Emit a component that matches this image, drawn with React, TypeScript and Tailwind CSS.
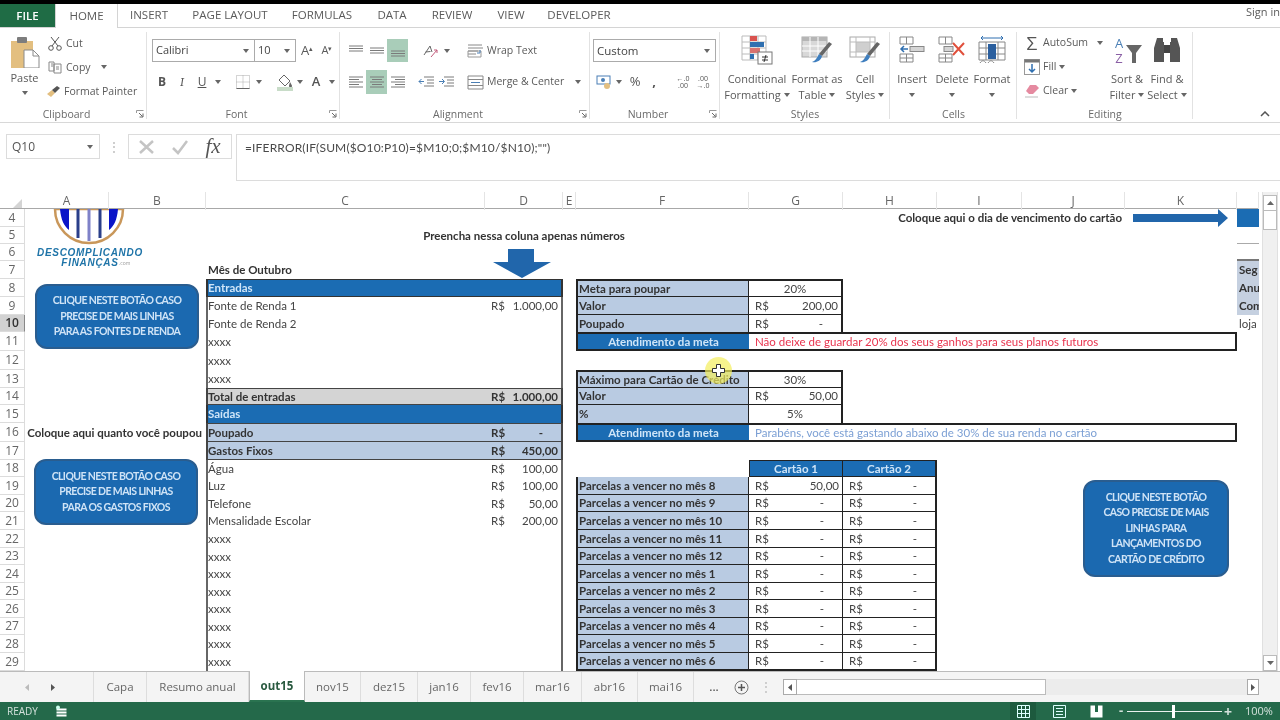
import type { ReactNode } from 'react'

const ui = "font-['Open_Sans',sans-serif]"
const cellFont = "font-['Lato',sans-serif]"

const tabs: [string, string][] = [
  ['INSERT', 'w-[62px]'],
  ['PAGE LAYOUT', 'w-[100px]'],
  ['FORMULAS', 'w-[84px]'],
  ['DATA', 'w-[56px]'],
  ['REVIEW', 'w-[64px]'],
  ['VIEW', 'w-[54px]'],
  ['DEVELOPER', 'w-[82px]'],
]

function Caret({ className = '' }: { className?: string }) {
  return (
    <svg width="6" height="4" viewBox="0 0 6 4" className={className}>
      <path d="M0 0h6L3 4z" fill="#666" />
    </svg>
  )
}

function Slot({ w, children, on }: { w: string; children?: ReactNode; on?: boolean }) {
  return (
    <div className={`${w} h-full flex items-center justify-center shrink-0 ${on ? 'bg-[#a9cdb9]' : ''}`}>{children}</div>
  )
}

function Launcher() {
  return (
    <svg width="8" height="8" viewBox="0 0 8 8" className="absolute right-[3px] bottom-[4px]">
      <path d="M.5 3V.5H7.5" fill="none" stroke="#999" />
      <path d="M3 3l3.500 3.500M7 3.500V7H3.500" fill="none" stroke="#666" />
    </svg>
  )
}

function Group({ w, label, launcher, children }: { w: string; label: string; launcher?: boolean; children: ReactNode }) {
  return (
    <div className={`${w} shrink-0 h-full flex flex-col relative`}>
      <div className="h-[78px]">{children}</div>
      <div className={`text-center text-[#6a6a6a] text-[10.500px] leading-[16px] ${launcher ? 'pr-[14px]' : ''}`}>{label}</div>
      {launcher && <Launcher />}
      <div className="absolute right-0 top-[4px] bottom-[3px] w-px bg-[#e2e2e2]" />
    </div>
  )
}

function Lines({ kind }: { kind: 'top' | 'mid' | 'bot' | 'l' | 'c' | 'r' }) {
  const ys = kind === 'top' ? [1, 3.500, 6] : kind === 'mid' ? [3, 5.500, 8] : kind === 'bot' ? [6, 8.500, 11] : [1, 3.500, 6, 8.500, 11]
  return (
    <svg width="14" height="12" viewBox="0 0 14 12">
      {ys.map((y, i) => {
        const short = i % 2 === 1 && ys.length === 5
        const x1 = kind === 'r' && short ? 4 : kind === 'c' && short ? 2 : 0
        const x2 = kind === 'l' && short ? 10 : kind === 'c' && short ? 12 : 14
        return <line key={y} x1={x1} x2={x2} y1={y} y2={y} stroke="#7a7a7a" strokeWidth="1" />
      })}
    </svg>
  )
}

function Indent({ flip }: { flip?: boolean }) {
  return (
    <svg width="16" height="12" viewBox="0 0 16 12">
      <path d="M6 1h10M9 4h7M9 7h7M6 10h10" stroke="#7a7a7a" fill="none" />
      <path d={flip ? 'M1 5.500h5M4 3l2.500 2.500L4 8' : 'M6 5.500H1M3.500 3L1 5.500 3.500 8'} stroke="#4a7fb5" fill="none" />
    </svg>
  )
}

function PasteIcon() {
  return (
    <svg width="32" height="32" viewBox="0 0 32 32">
      <rect x="2" y="5" width="22" height="27" fill="#e3bf80" />
      <rect x="8" y="1" width="10" height="6" rx="1" fill="#7d7d7d" />
      <path d="M15 14h9l6 6v12H15z" fill="#fff" stroke="#8a8a8a" />
      <path d="M24 14v6h6" fill="none" stroke="#8a8a8a" />
    </svg>
  )
}

function BrushIcon() {
  return (
    <svg width="16" height="14" viewBox="0 0 16 14">
      <path d="M1 10l5-4 3 3-4 4z" fill="#e3bf80" />
      <path d="M6 6l5-4 3 2-5 5z" fill="#555" />
    </svg>
  )
}

function CondIcon() {
  return (
    <svg width="32" height="30" viewBox="0 0 32 30">
      <path d="M1 1h24v24H1zM1 7h24M1 13h24M1 19h24M9 1v24M17 1v24" fill="#fff" stroke="#bbb" />
      <rect x="9" y="1" width="7" height="5" fill="#d9534f" />
      <rect x="9" y="7" width="14" height="5" fill="#2f6fb0" />
      <rect x="9" y="13" width="10" height="5" fill="#d9736f" />
      <rect x="9" y="19" width="4" height="5" fill="#2f6fb0" />
      <rect x="17" y="17" width="14" height="12" fill="#fff" stroke="#777" />
      <path d="M21 22h6M21 25h6M25 20l-2 7" stroke="#333" fill="none" />
    </svg>
  )
}

function TableIcon() {
  return (
    <svg width="32" height="30" viewBox="0 0 32 30">
      <rect x="1" y="2" width="25" height="20" fill="#d8d8d8" stroke="#aaa" />
      <rect x="1" y="2" width="25" height="4" fill="#b5b5b5" />
      <path d="M1 11h25M1 16h25M9 2v20M17 2v20" stroke="#fff" />
      <path d="M31 9L21 21l-3-2L28 7z" fill="#666" />
      <path d="M18 19l3 2c-1 5-6 7-10 6 3-1 5-4 7-8z" fill="#3f7fbf" />
    </svg>
  )
}

function CellStyleIcon() {
  return (
    <svg width="32" height="30" viewBox="0 0 32 30">
      <rect x="1" y="2" width="25" height="20" fill="#fff" stroke="#aaa" />
      <rect x="7" y="7" width="14" height="10" fill="#cfcfcf" />
      <path d="M1 7h25M1 17h25M7 2v20M21 2v20" stroke="#bbb" />
      <path d="M31 9L21 21l-3-2L28 7z" fill="#666" />
      <path d="M18 19l3 2c-1 5-6 7-10 6 3-1 5-4 7-8z" fill="#3f7fbf" />
    </svg>
  )
}

function InsertIcon() {
  return (
    <svg width="26" height="28" viewBox="0 0 26 28">
      <path d="M1 1h13v7H1zM7.500 1v7M1 18h13v8H1zM1 22h13M7.500 18v8" fill="#fff" stroke="#888" />
      <rect x="11" y="10.500" width="14" height="5" fill="#d5d5d5" stroke="#888" />
      <path d="M9 13H2M5 10l-3 3 3 3" fill="none" stroke="#2f6fb0" strokeWidth="1.500" />
    </svg>
  )
}

function DeleteIcon() {
  return (
    <svg width="28" height="28" viewBox="0 0 28 28">
      <path d="M1 1h13v7H1zM7.500 1v7M1 18h13v8H1zM1 22h13M7.500 18v8" fill="#fff" stroke="#888" />
      <rect x="6" y="10.500" width="9" height="5" fill="#d5d5d5" stroke="#888" />
      <path d="M15 7l11 12M26 7L15 19" stroke="#e0503c" strokeWidth="2" />
    </svg>
  )
}

function FormatIcon() {
  return (
    <svg width="28" height="30" viewBox="0 0 28 30">
      <path d="M1 7h26v18H1zM1 13h26M1 19h26M8 7v18M20 7v18" fill="#fff" stroke="#888" />
      <rect x="10" y="9" width="8" height="15" fill="#2b5f9e" />
      <path d="M3 3h22M3 3l2-2M3 3l2 2M25 3l-2-2M25 3l-2 2" fill="none" stroke="#2f6fb0" />
      <path d="M2 28c2-3 4-3 6 0M10 28c2-3 4-3 6 0" fill="none" stroke="#888" />
    </svg>
  )
}

function SortIcon() {
  return (
    <div className="w-[30px] h-[30px] flex items-center">
      <div className="w-[14px] flex flex-col items-center gap-[1px] text-[13px]">
        <span className="text-[#4a7fb5] h-[14px] leading-[14px]">A</span>
        <span className="text-[#8a5fa5] h-[14px] leading-[14px]">Z</span>
      </div>
      <svg width="16" height="18" viewBox="0 0 16 18" className="mt-[8px]">
        <path d="M0 0h16l-6 8v10H6V8z" fill="#666" />
      </svg>
    </div>
  )
}

function FindIcon() {
  return (
    <svg width="28" height="26" viewBox="0 0 28 26">
      <path d="M4 1h6v4h1v20H1V11zM24 1h-6v4h-1v20h10V11z" fill="#555" />
      <rect x="11" y="8" width="6" height="8" fill="#444" />
    </svg>
  )
}

function BigBtn({ w, icon, a, b }: { w: string; icon: ReactNode; a: string; b?: string }) {
  return (
    <div className={`${w} shrink-0 flex flex-col items-center pt-[7px] text-[11px]`}>
      <div className="h-[30px] flex items-center">{icon}</div>
      <div className="mt-[6px] leading-[16px] whitespace-nowrap">{a}</div>
      <div className="h-[16px] leading-[16px] flex items-center gap-[3px] whitespace-nowrap">
        {b}
        <Caret />
      </div>
    </div>
  )
}

function Ribbon() {
  return (
    <div className="h-[95px] flex border-b border-[#d8d8d8] text-[#5a5a5a] text-[10.500px] shrink-0">
      <Group w="w-[147px]" label="Clipboard" launcher>
        <div className="flex">
          <div className="w-[46px] flex flex-col items-center pt-[8px] pl-[3px]">
            <PasteIcon />
            <div className="mt-[3px] leading-[14px] text-[11px]">Paste</div>
            <Caret className="mt-[6px]" />
          </div>
          <div className="pt-[3px] leading-[24px]">
            <div className="h-[24px] flex items-center gap-[4px] pl-[2px]">
              <svg width="14" height="15" viewBox="0 0 14 15">
                <path d="M3 1l7 9M11 1L4 10" stroke="#555" fill="none" />
                <circle cx="3" cy="12" r="2.300" fill="none" stroke="#555" />
                <circle cx="11" cy="12" r="2.300" fill="none" stroke="#555" />
              </svg>
              Cut
            </div>
            <div className="h-[24px] flex items-center gap-[4px] pl-[2px]">
              <svg width="14" height="13" viewBox="0 0 14 13">
                <path d="M1 1h5v9H1zM6 3h7v9H6zM3 3h2M3 5h2M8 6h3M8 8h3" fill="#fff" stroke="#888" />
              </svg>
              Copy
              <Caret className="ml-[6px]" />
            </div>
            <div className="h-[24px] flex items-center gap-[2px]">
              <BrushIcon />
              Format Painter
            </div>
          </div>
        </div>
      </Group>

      <Group w="w-[193px]" label="Font" launcher>
        <div className="flex h-[23px] mt-[11px] pl-[5px]">
          <div className="w-[103px] border border-[#ababab] flex items-center justify-between px-[3px] text-[#444] text-[11px]">
            Calibri
            <Caret className="mr-[2px]" />
          </div>
          <div className="w-[41px] border border-l-0 border-[#ababab] flex items-center justify-between px-[3px] text-[#444] text-[11px]">
            10
            <Caret className="mr-[2px]" />
          </div>
          <Slot w="w-[20px] ml-[1px]">
            <span className="text-[13px]">A<sup className="text-[7px]">▴</sup></span>
          </Slot>
          <Slot w="w-[20px]">
            <span className="text-[11px]">A<sup className="text-[7px]">▾</sup></span>
          </Slot>
        </div>
        <div className="flex h-[24px] mt-[8px] pl-[5px] text-[12px] text-[#555]">
          <Slot w="w-[20px]"><b>B</b></Slot>
          <Slot w="w-[20px]"><i className="font-serif">I</i></Slot>
          <Slot w="w-[20px]"><u>U</u></Slot>
          <Slot w="w-[12px]"><Caret /></Slot>
          <Slot w="w-[22px] ml-[8px]">
            <svg width="14" height="14" viewBox="0 0 14 14">
              <path d="M.5.500h13v13H.5zM7 .5v13M.5 7h13" fill="none" stroke="#aaa" strokeDasharray="1 1" />
              <path d="M.5 13.500h13" stroke="#666" />
            </svg>
          </Slot>
          <Slot w="w-[10px]"><Caret /></Slot>
          <Slot w="w-[22px] ml-[10px]">
            <svg width="18" height="17" viewBox="0 0 18 17">
              <path d="M8 1l6 6-5 5-6-6z" fill="#fff" stroke="#666" />
              <path d="M14 8c1 2 2 3 2 4a1.500 1.500 0 01-3 0c0-1 .5-2 1-4z" fill="#666" />
              <rect x="1" y="13" width="16" height="4" fill="#c8dcc8" />
            </svg>
          </Slot>
          <Slot w="w-[8px]"><Caret /></Slot>
          <Slot w="w-[20px] ml-[2px]"><span className="font-semibold text-[13px]">A</span></Slot>
          <Slot w="w-[12px]"><Caret /></Slot>
        </div>
      </Group>

      <Group w="w-[250px]" label="Alignment" launcher>
        <div className="flex h-[23px] mt-[11px] pl-[6px]">
          <Slot w="w-[20px]"><Lines kind="top" /></Slot>
          <Slot w="w-[21px]"><Lines kind="mid" /></Slot>
          <Slot w="w-[21px]" on><Lines kind="bot" /></Slot>
          <Slot w="w-[24px] ml-[10px]">
            <svg width="16" height="14" viewBox="0 0 16 14">
              <path d="M2 11L8 2l2 6M3.500 8l5-.5" stroke="#666" fill="none" />
              <path d="M9 13l6-7M12 6h3v3" stroke="#c25a7a" fill="none" />
            </svg>
          </Slot>
          <Slot w="w-[10px]"><Caret /></Slot>
          <div className="ml-[15px] flex items-center gap-[3px] whitespace-nowrap">
            <svg width="17" height="14" viewBox="0 0 17 14">
              <path d="M1 1h14M1 4h15M1 7h10M1 10h8" stroke="#888" fill="none" />
              <path d="M1 7h13v6H1z" fill="none" stroke="#999" />
              <path d="M13 6v3h-3" stroke="#4a7fb5" fill="none" />
            </svg>
            Wrap Text
          </div>
        </div>
        <div className="flex h-[24px] mt-[8px] pl-[6px]">
          <Slot w="w-[20px]"><Lines kind="l" /></Slot>
          <Slot w="w-[21px]" on><Lines kind="c" /></Slot>
          <Slot w="w-[21px]"><Lines kind="r" /></Slot>
          <Slot w="w-[20px] ml-[8px]"><Indent /></Slot>
          <Slot w="w-[20px]"><Indent flip /></Slot>
          <div className="ml-[11px] flex items-center gap-[3px] whitespace-nowrap">
            <svg width="17" height="15" viewBox="0 0 17 15">
              <path d="M1 1h15v13H1zM1 4.500h15M1 10.500h15" fill="#fff" stroke="#888" />
              <path d="M4 7.500h9" stroke="#4a7fb5" />
            </svg>
            Merge &amp; Center
            <Caret className="ml-[8px]" />
          </div>
        </div>
      </Group>

      <Group w="w-[130px]" label="Number" launcher>
        <div className="h-[23px] mt-[11px] ml-[3px] w-[123px] border border-[#ababab] flex items-center justify-between px-[3px] text-[11.500px] text-[#444]">
          Custom
          <Caret className="mr-[2px]" />
        </div>
        <div className="flex h-[24px] mt-[8px] pl-[5px] text-[#555]">
          <Slot w="w-[18px]">
            <svg width="16" height="15" viewBox="0 0 16 15">
              <rect x="1" y="1" width="13" height="8" fill="#fff" stroke="#4a7fb5" />
              <circle cx="7" cy="5" r="2" fill="#4a7fb5" />
              <circle cx="11" cy="11" r="3" fill="#e3bf80" />
            </svg>
          </Slot>
          <Slot w="w-[12px]"><Caret /></Slot>
          <Slot w="w-[20px]"><span className="text-[13px]">%</span></Slot>
          <Slot w="w-[18px]"><b className="text-[13px]">,</b></Slot>
          <Slot w="w-[20px] ml-[10px]">
            <span className="text-[7px] leading-[7px] text-center">←.0<br />.00</span>
          </Slot>
          <Slot w="w-[20px]">
            <span className="text-[7px] leading-[7px] text-center">.00<br />→.0</span>
          </Slot>
        </div>
      </Group>

      <Group w="w-[170px]" label="Styles">
        <div className="flex pl-[2px]">
          <BigBtn w="w-[70px]" icon={<CondIcon />} a="Conditional" b="Formatting" />
          <BigBtn w="w-[50px]" icon={<TableIcon />} a="Format as" b="Table" />
          <BigBtn w="w-[46px]" icon={<CellStyleIcon />} a="Cell" b="Styles" />
        </div>
      </Group>

      <Group w="w-[127px]" label="Cells">
        <div className="flex pl-[2px]">
          <BigBtn w="w-[40px]" icon={<InsertIcon />} a="Insert" />
          <BigBtn w="w-[40px]" icon={<DeleteIcon />} a="Delete" />
          <BigBtn w="w-[40px]" icon={<FormatIcon />} a="Format" />
        </div>
      </Group>

      <Group w="w-[176px]" label="Editing">
        <div className="flex">
          <div className="w-[90px] pl-[7px] pt-[3px]">
            <div className="h-[24px] flex items-center gap-[3px]">
              <span className="w-[16px] text-[19px] leading-none text-[#555] text-center">Σ</span>
              AutoSum
              <Caret className="ml-[6px]" />
            </div>
            <div className="h-[24px] flex items-center gap-[3px]">
              <svg width="16" height="16" viewBox="0 0 16 16">
                <rect x=".5" y=".5" width="15" height="15" fill="#fff" stroke="#999" />
                <rect x=".5" y=".5" width="15" height="3" fill="#777" />
                <path d="M8 5v8M5 10l3 3 3-3" fill="none" stroke="#2f6fb0" strokeWidth="1.500" />
              </svg>
              Fill
              <Caret />
            </div>
            <div className="h-[24px] flex items-center gap-[3px]">
              <svg width="16" height="14" viewBox="0 0 16 14">
                <path d="M6 1h6l3 3-6 6H5L2 7z" fill="#e58aa0" />
                <path d="M1 13h13" stroke="#bbb" />
              </svg>
              Clear
              <Caret />
            </div>
          </div>
          <BigBtn w="w-[40px]" icon={<SortIcon />} a="Sort &" b="Filter" />
          <BigBtn w="w-[40px]" icon={<FindIcon />} a="Find &" b="Select" />
        </div>
      </Group>

      <div className="flex-1 flex items-end justify-end pr-[10px] pb-[5px]">
        <svg width="10" height="6" viewBox="0 0 10 6">
          <path d="M1 5l4-4 4 4" fill="none" stroke="#555" strokeWidth="1.500" />
        </svg>
      </div>
    </div>
  )
}

function FormulaBar() {
  return (
    <div className="h-[69px] shrink-0 flex items-start pt-[11px] pl-[6px]">
      <div className="w-[94px] h-[25px] border border-[#dcdcdc] flex items-center justify-between pl-[5px] pr-[6px] text-[12px] text-[#555]">
        Q10
        <Caret />
      </div>
      <div className="w-[28px] h-[25px] flex items-center justify-center text-[#b5b5b5] text-[12px] leading-[6px]">⋮</div>
      <div className="w-[104px] h-[25px] border border-[#dcdcdc] flex items-center">
        <Slot w="w-[34px]">
          <svg width="17" height="16" viewBox="0 0 17 16"><path d="M2 2l13 12M15 2L2 14" stroke="#c4c4c4" strokeWidth="2.500" /></svg>
        </Slot>
        <Slot w="w-[34px]">
          <svg width="18" height="16" viewBox="0 0 18 16"><path d="M2 9l5 5L16 2" fill="none" stroke="#c4c4c4" strokeWidth="2.500" /></svg>
        </Slot>
        <Slot w="w-[32px]">
          <i className="font-['Liberation_Serif',serif] text-[21px] text-[#555]">fx</i>
        </Slot>
      </div>
      <div className={`ml-[4px] flex-1 h-[47px] border border-[#dcdcdc] border-r-0 pl-[8px] pt-[4px] text-[12px] text-[#4a4a4a] tracking-[0.15px] ${cellFont}`}>
        =IFERROR(IF(SUM($O10:P10)=$M10;0;$M10/$N10);"")
      </div>
    </div>
  )
}

const cols = ['A', 'B', 'C', 'D', 'E', 'F', 'G', 'H', 'I', 'J', 'K', 'L'] as const
type Col = (typeof cols)[number]
type Cell = { t?: ReactNode; c?: string; span?: number }
type Row = Partial<Record<Col, Cell>>

const blue = 'bg-[#1b6cb3] text-[#cfe5f8] font-bold'
const label = 'bg-[#b9cbe2] text-[#333] font-bold border-l-2 border-r border-[#222]'

function Money({ v, bold }: { v: string; bold?: boolean }) {
  return (
    <div className={`w-full flex justify-between pl-[6px] pr-[3px] ${bold ? 'font-bold' : ''}`}>
      <span>R$</span>
      <span className={v === '-' ? 'pr-[15px]' : ''}>{v}</span>
    </div>
  )
}

const plain = (t: string): Row => ({
  C: { t, c: 'border-l-2 border-[#666]' },
  D: { c: 'border-r-2 border-[#666]' },
})
const spend = (t: string, v: string): Row => ({
  C: { t, c: 'border-l-2 border-[#666]' },
  D: { t: <Money v={v} />, c: 'border-r-2 border-[#666]' },
})
const xxxx = plain('xxxx')

const cardRow = (n: number, a: string, last?: boolean): Row => ({
  F: { t: `Parcelas a vencer no mês ${n}`, c: `${label} pl-[1px] border-b ${last ? 'border-b-2' : ''}` },
  G: { t: <Money v={a} />, c: `bg-white border-r border-b border-[#222] ${last ? 'border-b-2' : ''}` },
  H: { t: <Money v="-" />, c: `bg-white border-r-2 border-b border-[#222] ${last ? 'border-b-2' : ''}` },
})

const goalHead = (t: string, msg: string, color: string): Row => ({
  F: { t, c: `${blue} border-y-2 border-l-2 border-[#222] justify-center` },
  G: { t: msg, c: `col-span-5 bg-white border-y-2 border-r-2 border-[#222] pl-[6px] ${color}`, span: 5 },
})

const heights = [18, 17, 17, 18, 18, 18, 17, 19, 19, 18, 17, 18, 19, 18, 17, 18, 17, 18, 18, 17, 18, 17, 18, 17, 18, 18]

const rows: Row[] = [
  {
    H: { t: 'Coloque aqui o dia de vencimento do cartão', c: 'col-span-3 justify-end font-bold text-[#333] pr-[3px]', span: 3 },
    L: { c: 'bg-[#1b6cb3]' },
  },
  {
    D: { t: 'Preencha nessa coluna apenas números', c: 'justify-center font-bold text-[#333] overflow-visible' },
    L: { c: 'border-b border-[#aaa]' },
  },
  { L: { c: 'border-b-2 border-[#777]' } },
  {
    C: { t: 'Mês de Outubro', c: 'font-bold text-[#333] pl-[2px]' },
    L: { t: 'Seg', c: 'bg-[#c5d0e0] font-bold text-[#333] pl-[2px]' },
  },
  {
    C: { t: 'Entradas', c: `${blue} border-y border-l-2 border-[#333]` },
    D: { c: `${blue} border-y border-r-2 border-[#333]` },
    F: { t: 'Meta para poupar', c: `${label} border-t-2 border-b pl-[1px]` },
    G: { t: '20%', c: 'bg-white border-t-2 border-r-2 border-b border-[#222] justify-center' },
    L: { t: 'Anu', c: 'bg-[#c5d0e0] font-bold text-[#333] pl-[2px]' },
  },
  {
    ...spend('Fonte de Renda 1', '1.000,00'),
    F: { t: 'Valor', c: `${label} border-b pl-[1px]` },
    G: { t: <Money v="200,00" />, c: 'bg-white border-r-2 border-b border-[#222]' },
    L: { t: 'Com', c: 'bg-[#c5d0e0] font-bold text-[#333] pl-[2px]' },
  },
  {
    ...plain('Fonte de Renda 2'),
    F: { t: 'Poupado', c: `${label} pl-[1px]` },
    G: { t: <Money v="-" />, c: 'bg-white border-r-2 border-[#222]' },
    L: { t: 'loja', c: 'pl-[2px]' },
  },
  { ...xxxx, ...goalHead('Atendimento da meta', 'Não deixe de guardar 20% dos seus ganhos para seus planos futuros', 'text-[#e8344e]') },
  xxxx,
  {
    ...xxxx,
    F: { t: 'Máximo para Cartão de Crédito', c: `${label} border-t-2 border-b pl-[1px]` },
    G: { t: '30%', c: 'bg-white border-t-2 border-r-2 border-b border-[#222] justify-center' },
  },
  {
    C: { t: 'Total de entradas', c: 'bg-[#d4d4d4] font-bold text-[#333] border-y border-l-2 border-[#444]' },
    D: { t: <Money v="1.000,00" bold />, c: 'bg-[#d4d4d4] text-[#333] border-y border-r-2 border-[#444]' },
    F: { t: 'Valor', c: `${label} border-b pl-[1px]` },
    G: { t: <Money v="50,00" />, c: 'bg-white border-r-2 border-b border-[#222]' },
  },
  {
    C: { t: 'Saídas', c: `${blue} border-l-2 border-[#333]` },
    D: { c: `${blue} border-r-2 border-[#333]` },
    F: { t: '%', c: `${label} pl-[1px]` },
    G: { t: '5%', c: 'bg-white border-r-2 border-[#222] justify-center' },
  },
  {
    A: { t: 'Coloque aqui quanto você poupou', c: 'col-span-2 justify-end font-bold text-[#333] pr-[4px]', span: 2 },
    C: { t: 'Poupado', c: 'bg-[#b9cbe2] font-bold text-[#333] border-y border-l-2 border-[#444]' },
    D: { t: <Money v="-" bold />, c: 'bg-[#b9cbe2] text-[#333] border-y border-r-2 border-[#444]' },
    ...goalHead('Atendimento da meta', 'Parabéns, você está gastando abaixo de 30% de sua renda no cartão', 'text-[#7b9fd4]'),
  },
  {
    C: { t: 'Gastos Fixos', c: 'bg-[#b9cbe2] font-bold text-[#333] border-b border-l-2 border-[#444]' },
    D: { t: <Money v="450,00" bold />, c: 'bg-[#b9cbe2] text-[#333] border-b border-r-2 border-[#444]' },
  },
  {
    ...spend('Água', '100,00'),
    G: { t: 'Cartão 1', c: `${blue} border border-[#222] justify-center` },
    H: { t: 'Cartão 2', c: `${blue} border-y border-r-2 border-[#222] justify-center` },
  },
  { ...spend('Luz', '100,00'), ...cardRow(8, '50,00') },
  { ...spend('Telefone', '50,00'), ...cardRow(9, '-') },
  { ...spend('Mensalidade Escolar', '200,00'), ...cardRow(10, '-') },
  { ...xxxx, ...cardRow(11, '-') },
  { ...xxxx, ...cardRow(12, '-') },
  { ...xxxx, ...cardRow(1, '-') },
  { ...xxxx, ...cardRow(2, '-') },
  { ...xxxx, ...cardRow(3, '-') },
  { ...xxxx, ...cardRow(4, '-') },
  { ...xxxx, ...cardRow(5, '-') },
  { ...xxxx, ...cardRow(6, '-', true) },
]

function Btn({ box, lines }: { box: string; lines: string[] }) {
  return (
    <div className={`absolute ${box} rounded-[12px] bg-[#1b69b0] border-2 border-[#2a5d8f] flex flex-col items-center justify-center text-[#cfe3f6] text-[10.500px] leading-[15.500px] font-bold tracking-[-0.6px] ${cellFont}`}>
      {lines.map((l) => (
        <div key={l} className="whitespace-nowrap">{l}</div>
      ))}
    </div>
  )
}

function Sheet() {
  return (
    <div className="flex-1 min-h-0 flex">
      <div className="w-[1259px] flex flex-col">
        <div className={`h-[17px] shrink-0 grid grid-cols-[25px_84px_97px_279px_78px_13px_173px_94px_94px_85px_103px_112px_22px] border-b border-[#a8a8a8] text-[12px] text-[#666] ${ui}`}>
          <div className="flex items-end justify-end pr-[3px] pb-[2px]">
            <svg width="9" height="9" viewBox="0 0 9 9"><path d="M9 0v9H0z" fill="#d4d4d4" /></svg>
          </div>
          {cols.map((c) => (
            <div key={c} className="border-r border-[#e4e4e4] flex items-center justify-center">
              {c === 'L' ? '' : c}
            </div>
          ))}
        </div>
        <div className="relative flex-1 min-h-0 overflow-hidden">
          <div className={`grid grid-cols-[25px_84px_97px_279px_78px_13px_173px_94px_94px_85px_103px_112px_22px] text-[11.500px] text-[#444] ${cellFont}`}>
            {rows.map((row, i) => {
              const cells: ReactNode[] = []
              for (let k = 0; k < cols.length; k++) {
                const col = cols[k]
                const cell = row[col]
                cells.push(
                  <div
                    key={col}
                    style={{ height: heights[i] }}
                    className={`flex items-center whitespace-nowrap min-w-0 ${cell?.c ?? ''}`}
                  >
                    {cell?.t}
                  </div>
                )
                if (cell?.span) k += cell.span - 1
              }
              const n = i + 4
              return (
                <div key={n} className="contents">
                  <div
                    style={{ height: heights[i] }}
                    className={`flex items-center justify-center border-b border-r border-[#dcdcdc] text-[12px] ${ui} ${n === 10 ? 'bg-[#d2d2d2] text-[#333] font-semibold border-r-[#888]' : 'text-[#666]'}`}
                  >
                    {n}
                  </div>
                  {cells}
                </div>
              )
            })}
          </div>

          <svg width="72" height="38" viewBox="0 0 72 38" className="absolute left-[53px] top-0">
            <path d="M2 0a34 34 0 0068 0z" fill="#fff" stroke="#c9975a" strokeWidth="2.500" />
            <path d="M7 0c1 11 4 17 9 21V0zM65 0c-1 11-4 17-9 21V0z" fill="#0a14c8" />
            <path d="M25 0v29M47 0v29" stroke="#2a3f8a" strokeWidth="3" />
            <path d="M36 0v32" stroke="#7f82c8" strokeWidth="3" />
          </svg>
          <div className="absolute left-[37px] top-[39px] w-[106px] text-center text-[#1f74a8] italic font-bold font-['Liberation_Sans',sans-serif] text-[10px] leading-[10px]">
            <div className="whitespace-nowrap tracking-[0.7px]">DESCOMPLICANDO</div>
            <div className="whitespace-nowrap tracking-[0.7px]">FINANÇAS</div>
          </div>
          <div className="absolute left-[119px] top-[51px] text-[#9a9a9a] text-[5px] leading-[6px]">.com</div>

          <Btn box="left-[35px] top-[75px] w-[164px] h-[65px]" lines={['CLIQUE NESTE BOTÃO CASO', 'PRECISE DE MAIS LINHAS', 'PARA AS FONTES DE RENDA']} />
          <Btn box="left-[34px] top-[250px] w-[164px] h-[66px]" lines={['CLIQUE NESTE BOTÃO CASO', 'PRECISE DE MAIS LINHAS', 'PARA OS GASTOS FIXOS']} />
          <Btn box="left-[1083px] top-[271px] w-[146px] h-[97px]" lines={['CLIQUE NESTE BOTÃO', 'CASO PRECISE DE MAIS', 'LINHAS PARA', 'LANÇAMENTOS DO', 'CARTÃO DE CRÉDITO']} />

          <svg width="58" height="29" viewBox="0 0 58 29" className="absolute left-[493px] top-[40px]">
            <path d="M15 0h26v13h17L29 29 0 13h15z" fill="#2166ab" />
          </svg>
          <svg width="95" height="18" viewBox="0 0 95 18" className="absolute left-[1133px] top-0">
            <path d="M0 5h85V0l10 9-10 9v-5H0z" fill="#2166ab" />
          </svg>

          <div className="absolute left-[705px] top-[148px] w-[27px] h-[27px] rounded-full bg-[#f3ee5c]/70" />
          <svg width="13" height="13" viewBox="0 0 13 13" className="absolute left-[712px] top-[155px]">
            <path d="M4.500.5h4v4h4v4h-4v4h-4v-4h-4v-4h4z" fill="#fff" stroke="#333" />
          </svg>
        </div>
      </div>
      <div className="w-[3px]" />
      <div className="w-[16px] flex flex-col bg-[#f0f0f0] border-x border-[#e0e0e0]">
        <div className="h-[16px] mt-[3px] bg-white border border-[#bbb] flex items-center justify-center">
          <svg width="7" height="4" viewBox="0 0 7 4"><path d="M3.500 0L7 4H0z" fill="#666" /></svg>
        </div>
        <div className="h-[19px] bg-white border border-t-0 border-[#bbb]" />
        <div className="flex-1" />
        <div className="h-[16px] bg-white border border-[#bbb] flex items-center justify-center">
          <svg width="7" height="4" viewBox="0 0 7 4"><path d="M0 0h7L3.500 4z" fill="#666" /></svg>
        </div>
      </div>
      <div className="flex-1" />
    </div>
  )
}

const sheets: [string, string][] = [
  ['Capa', 'w-[53px]'],
  ['Resumo anual', 'w-[102px]'],
  ['out15', 'w-[56px]'],
  ['nov15', 'w-[56px]'],
  ['dez15', 'w-[57px]'],
  ['jan16', 'w-[53px]'],
  ['fev16', 'w-[53px]'],
  ['mar16', 'w-[58px]'],
  ['abr16', 'w-[56px]'],
  ['mai16', 'w-[56px]'],
]

function SheetTabs() {
  return (
    <div className="h-[31px] shrink-0 flex border-t border-[#bbb] bg-[#f4f4f4] text-[11.500px] text-[#666]">
      <div className="w-[94px] flex items-center pl-[25px] gap-[22px] border-r border-[#ddd]">
        <svg width="4" height="7" viewBox="0 0 4 7"><path d="M4 0v7L0 3.500z" fill="#bbb" /></svg>
        <svg width="4" height="7" viewBox="0 0 4 7"><path d="M0 0v7l4-3.500z" fill="#555" /></svg>
      </div>
      {sheets.map(([name, w]) => (
        <div
          key={name}
          className={`${w} flex items-center justify-center ${
            name === 'out15' ? 'bg-white font-bold text-[#2a5a40] border-x border-[#bbb] border-b-2 border-b-[#2a7350] -mt-px h-[31px]' : 'h-[30px] border-r border-[#ddd]'
          }`}
        >
          {name}
        </div>
      ))}
      <div className="w-[40px] flex items-center justify-center text-[#555] font-semibold">...</div>
      <div className="w-[15px] flex items-center justify-center">
        <svg width="15" height="15" viewBox="0 0 15 15">
          <circle cx="7.500" cy="7.500" r="6.500" fill="none" stroke="#777" />
          <path d="M7.500 4v7M4 7.500h7" stroke="#555" strokeWidth="1.500" />
        </svg>
      </div>
      <div className="w-[16px] ml-[9px] flex items-center justify-center text-[#bbb] leading-[6px]">⋮</div>
      <div className="w-[476px] ml-[9px] mt-[7px] h-[16px] flex bg-[#ececec]">
        <div className="w-[14px] bg-white border border-[#aaa] flex items-center justify-center">
          <svg width="4" height="7" viewBox="0 0 4 7"><path d="M4 0v7L0 3.500z" fill="#555" /></svg>
        </div>
        <div className="w-[249px] bg-white border-y border-r border-[#bbb]" />
        <div className="flex-1" />
        <div className="w-[12px] bg-white border border-[#aaa] flex items-center justify-center">
          <svg width="4" height="7" viewBox="0 0 4 7"><path d="M0 0v7l4-3.500z" fill="#555" /></svg>
        </div>
      </div>
    </div>
  )
}

function StatusBar() {
  return (
    <div className={`h-[18px] shrink-0 bg-[#24694a] flex items-center text-white/80 text-[10px] ${ui}`}>
      <span className="ml-[7px]">READY</span>
      <svg width="13" height="13" viewBox="0 0 13 13" className="ml-[17px]">
        <path d="M1 3h11v9H1zM1 6h11M1 9h11" fill="#fff" stroke="#24694a" />
        <circle cx="3" cy="2.500" r="2" fill="#cfe" />
      </svg>
      <div className="ml-auto flex items-center h-full">
        <div className="w-[26px] h-full bg-[#1d5a3e] flex items-center justify-center">
          <svg width="13" height="13" viewBox="0 0 13 13"><path d="M.5.500h12v12H.5zM.5 4.500h12M.5 8.500h12M4.500.5v12M8.500.5v12" fill="none" stroke="#dff" /></svg>
        </div>
        <div className="w-[37px] flex justify-center ml-[5px]">
          <svg width="13" height="13" viewBox="0 0 13 13"><path d="M.5.500h12v12H.5z" fill="none" stroke="#dff" /><path d="M3 3.500h7M3 6.500h7M3 9.500h7" stroke="#dff" /></svg>
        </div>
        <div className="w-[37px] flex justify-center">
          <svg width="13" height="13" viewBox="0 0 13 13"><path d="M.5.500h12v12H.5z" fill="#fff" /><path d="M5 0v7h3V0z" fill="#24694a" /></svg>
        </div>
        <span className="w-[12px] text-center text-[13px] font-bold">-</span>
        <div className="w-[95px] h-px bg-white/90 relative">
          <div className="absolute left-[45px] -top-[6px] w-[3px] h-[13px] bg-white" />
        </div>
        <span className="w-[12px] text-center text-[14px] font-bold">+</span>
        <span className="ml-[11px] w-[35px] text-[11px]">100%</span>
      </div>
    </div>
  )
}

export default function App() {
  return (
    <div className={`w-[1280px] h-[720px] flex flex-col overflow-hidden bg-white blur-[0.4px] ${ui}`}>
      <div className="h-[4px] bg-black shrink-0" />
      <div className="h-[24px] shrink-0 flex border-b border-[#d4d4d4] text-[11.500px] text-[#5a5a5a]">
        <div className="w-[55px] bg-[#1f6c45] text-white font-semibold flex items-center justify-center">FILE</div>
        <div className="w-[63px] h-[24px] bg-white border-x border-[#d4d4d4] flex items-center justify-center pb-[1px]">HOME</div>
        {tabs.map(([name, w]) => (
          <div key={name} className={`${w} flex items-center justify-center pb-[1px]`}>{name}</div>
        ))}
        <div className="ml-auto pb-[6px] flex items-center text-[11px] whitespace-nowrap w-[34px] overflow-hidden">Sign in</div>
      </div>
      <Ribbon />
      <FormulaBar />
      <Sheet />
      <SheetTabs />
      <StatusBar />
    </div>
  )
}
